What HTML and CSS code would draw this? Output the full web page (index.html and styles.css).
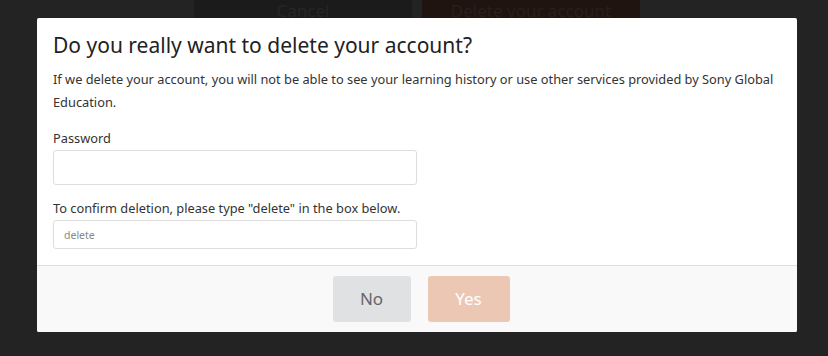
FILE: index.html
```html
<!DOCTYPE html>
<html lang="en">
<head>
    <meta charset="UTF-8">
    <meta name="viewport" content="width=device-width, initial-scale=1.0">
    <title>Delete account</title>
    <link rel="stylesheet" href="styles.css">
</head>
<body>
    <div class="page-actions">
        <button class="btn-back cancel">Cancel</button>
        <button class="btn-back danger">Delete your account</button>
    </div>
    <div class="overlay">
        <div class="modal">
            <div class="modal-body">
                <h2>Do you really want to delete your account?</h2>
                <p class="intro">If we delete your account, you will not be able to see your learning history or use other services provided by Sony Global Education.</p>
                <label class="field-label" for="password">Password</label>
                <input class="input input-lg" type="password" id="password">
                <label class="field-label confirm" for="confirm">To confirm deletion, please type "delete" in the box below.</label>
                <input class="input input-sm" type="text" id="confirm" placeholder="delete">
            </div>
            <div class="modal-footer">
                <button class="btn btn-no">No</button>
                <button class="btn btn-yes" disabled>Yes</button>
            </div>
        </div>
    </div>
</body>
</html>
```

FILE: styles.css
```css
body {
    font-family: "Noto Sans", "Open Sans", sans-serif;
    background-color: #232323;
    color: #333;
    margin: 0;
    padding: 0;
    height: 356px;
    overflow: hidden;
    position: relative;
}
.page-actions {
    display: flex;
    gap: 10px;
    padding-left: 194px;
    margin-top: -14px;
}
.btn-back {
    width: 218px;
    height: 40px;
    border: none;
    border-radius: 3px;
    font-family: inherit;
    font-size: 17px;
    padding-top: 10px;
}
.btn-back.cancel {
    background-color: #1b1b1b;
    color: #262626;
}
.btn-back.danger {
    background-color: #1f140f;
    color: #2a1f1a;
}
.overlay {
    position: absolute;
    top: 18px;
    left: 37px;
}
.modal {
    width: 760px;
    height: 314px;
    background-color: #fff;
    border-radius: 2px;
    display: flex;
    flex-direction: column;
    overflow: hidden;
}
.modal-body {
    padding: 12px 16px 0;
    flex: 1;
    display: flex;
    flex-direction: column;
    align-items: flex-start;
}
h2 {
    font-size: 21px;
    font-weight: normal;
    margin: 0;
    line-height: 30px;
    color: #222;
}
.intro {
    font-size: 12.8px;
    line-height: 23px;
    margin: 8px 0 0;
    color: #333;
}
.field-label {
    font-size: 12.8px;
    line-height: 18px;
    margin-top: 15px;
    color: #333;
}
.field-label.confirm {
    margin-top: 14px;
}
.input {
    width: 364px;
    box-sizing: border-box;
    border: 1px solid #ddd;
    border-radius: 3px;
    font-family: inherit;
    padding: 0 10px;
    margin-top: 3px;
}
.input-lg {
    height: 35px;
}
.input-sm {
    height: 29px;
    font-size: 10.5px;
    margin-top: 3px;
}
.input-sm::placeholder {
    color: #888;
}
.modal-footer {
    height: 67px;
    box-sizing: border-box;
    background-color: #f9f9f9;
    border-top: 1px solid #ddd;
    display: flex;
    justify-content: center;
    gap: 17px;
    padding: 10px 0 0 8px;
}
.btn {
    height: 46px;
    border: none;
    border-radius: 3px;
    font-family: inherit;
    font-size: 17px;
    padding-bottom: 3px;
}
.btn-no {
    width: 78px;
    background-color: #e0e1e3;
    color: #666;
}
.btn-yes {
    width: 82px;
    background-color: #ecc8b4;
    color: #fff;
}
```
